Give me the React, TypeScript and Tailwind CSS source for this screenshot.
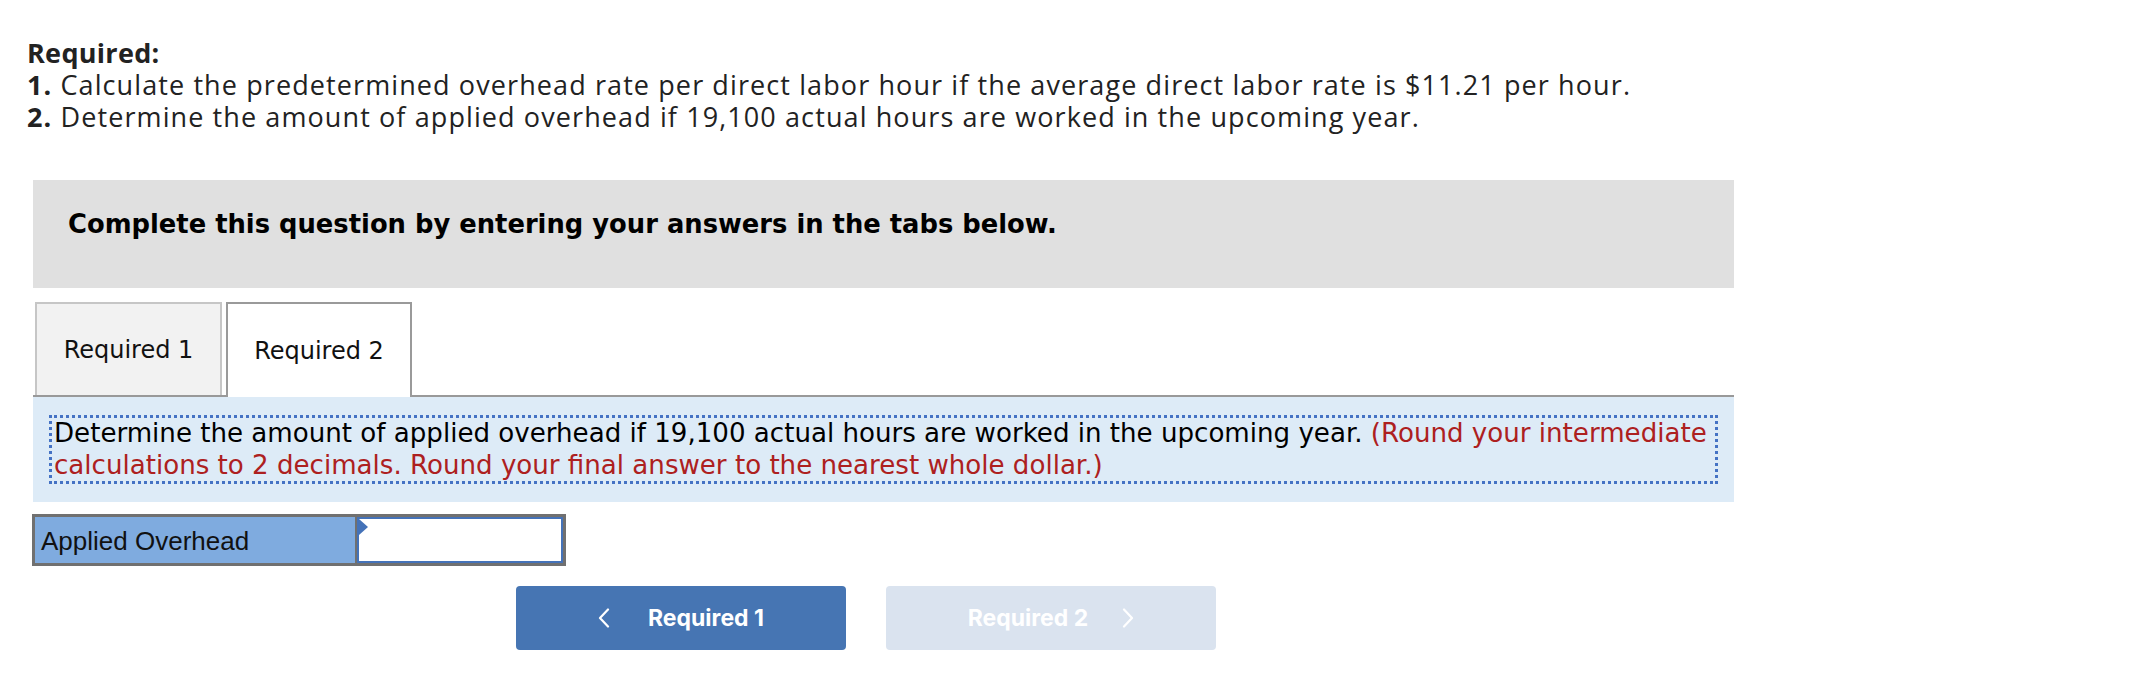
import React from "react";

function Chevron({ dir }: { dir: "left" | "right" }) {
  return (
    <svg width="12" height="20" viewBox="0 0 12 20" fill="none" className="shrink-0">
      {dir === "left" ? (
        <polyline points="10,1.5 2,10 10,18.5" stroke="white" strokeWidth="2.2" strokeLinecap="round" strokeLinejoin="round" />
      ) : (
        <polyline points="2,1.5 10,10 2,18.5" stroke="white" strokeWidth="2.2" strokeLinecap="round" strokeLinejoin="round" />
      )}
    </svg>
  );
}

export default function App() {
  return (
    <div className="w-[2142px] h-[674px] bg-white overflow-hidden">
      <div
        className="ml-[27px] pt-[37px] text-[27px] leading-[32px] tracking-[1.1px] text-[#222]"
        style={{ fontFamily: '"Open Sans", Arial, sans-serif' }}
      >
        <div className="font-bold tracking-[0.3px]">Required:</div>
        <div>
          <span className="font-bold">1.</span> Calculate the predetermined overhead rate per direct labor hour if the average direct labor rate is $11.21 per hour.
        </div>
        <div>
          <span className="font-bold">2.</span> Determine the amount of applied overhead if 19,100 actual hours are worked in the upcoming year.
        </div>
      </div>

      <div className="ml-[33px] w-[1701px]" style={{ fontFamily: '"DejaVu Sans", Verdana, sans-serif' }}>
        <div className="mt-[47px] h-[108px] bg-[#e0e0e0] pl-[35px] pt-[29px]">
          <div className="font-bold text-[25.8px] leading-[30px] text-black">Complete this question by entering your answers in the tabs below.</div>
        </div>

        <div className="mt-[14px] flex h-[95px] border-b-2 border-[#999999] pl-[2px]">
          <div className="w-[187px] h-[93px] border-2 border-b-0 border-[#c6c6c6] bg-[#f2f2f2] flex items-center justify-center text-[24px] text-[#111]">
            Required 1
          </div>
          <div className="ml-[4px] w-[186px] h-[95px] border-2 border-b-0 border-[#9a9a9a] bg-white flex items-center justify-center text-[24px] text-[#111] relative z-10">
            Required 2
          </div>
        </div>

        <div className="bg-[#ddebf7] pt-[18px] pb-[18px] pl-[16px] pr-[16px]">
          <div className="border-[3px] border-dotted border-[#4472c4] pl-[2px] text-[26.1px] leading-[31.5px] text-black whitespace-nowrap">
            Determine the amount of applied overhead if 19,100 actual hours are worked in the upcoming year.{" "}
            <span className="text-[#ad2020]">(Round your intermediate</span>
            <br />
            <span className="text-[#ad2020]">calculations to 2 decimals. Round your final answer to the nearest whole dollar.)</span>
          </div>
        </div>

        <div className="mt-[12px] -ml-[1px] flex w-[534px] h-[52px] border-[3px] border-[#707070]">
          <div
            className="w-[320px] bg-[#7fabdf] flex items-center pl-[6px] pt-[2px] text-[26px] text-[#111]"
            style={{ fontFamily: '"Liberation Sans", Arial, sans-serif' }}
          >
            Applied Overhead
          </div>
          <div className="w-[2px] bg-[#707070]" />
          <div className="relative flex-1 border-2 border-[#4472b8] bg-white">
            <svg width="9" height="17" viewBox="0 0 9 17" className="absolute left-0 top-0">
              <polygon points="0,0 9,8 0,16" fill="#4472b8" />
            </svg>
          </div>
        </div>

        <div className="mt-[20px] ml-[483px] flex gap-[40px]" style={{ fontFamily: 'Inter, "Open Sans", sans-serif' }}>
          <div className="w-[330px] h-[64px] rounded-[4px] bg-[#4675b3] flex items-center justify-center gap-[38px] text-white font-bold text-[23px]">
            <Chevron dir="left" />
            <span>Required 1</span>
          </div>
          <div className="w-[330px] h-[64px] rounded-[4px] bg-[#dae3ef] flex items-center justify-center gap-[34px] text-white font-bold text-[23px]">
            <span>Required 2</span>
            <Chevron dir="right" />
          </div>
        </div>
      </div>
    </div>
  );
}
